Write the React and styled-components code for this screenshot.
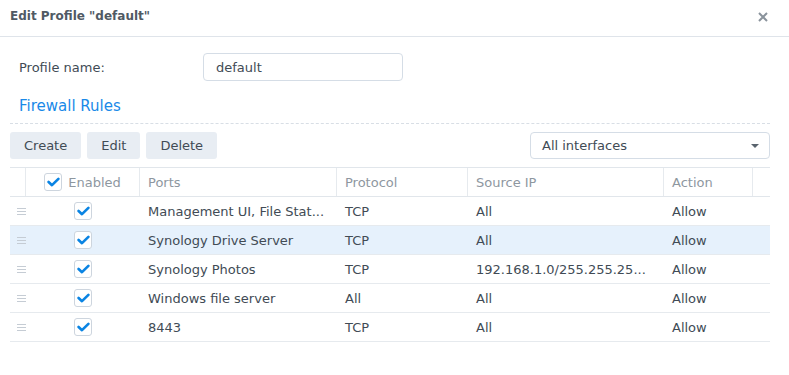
import React from "react";
import styled, { createGlobalStyle } from "styled-components";

const GlobalStyle = createGlobalStyle`
  html, body {
    margin: 0;
    padding: 0;
    background: #ffffff;
  }
  body {
    font-family: "DejaVu Sans", Verdana, sans-serif;
    font-size: 13px;
    color: #414b55;
  }
`;

const rules = [
  { ports: "Management UI, File Stat...", protocol: "TCP", source: "All", action: "Allow" },
  { ports: "Synology Drive Server", protocol: "TCP", source: "All", action: "Allow", selected: true },
  { ports: "Synology Photos", protocol: "TCP", source: "192.168.1.0/255.255.25...", action: "Allow" },
  { ports: "Windows file server", protocol: "All", source: "All", action: "Allow" },
  { ports: "8443", protocol: "TCP", source: "All", action: "Allow" },
];

const columns = "16px 114px 197px 131px 196px 89px 17px";

const CheckIcon = () => (
  <svg width="13" height="10" viewBox="0 0 13 10">
    <path d="M1.6 5 L5 8.2 L11.4 1.8" fill="none" stroke="#0a84e3" strokeWidth="2.6" strokeLinecap="round" strokeLinejoin="round" />
  </svg>
);

const Checkbox = () => (
  <Box>
    <CheckIcon />
  </Box>
);

const App = () => (
  <>
    <GlobalStyle />
    <Dialog>
      <TitleBar>
        <Title>Edit Profile "default"</Title>
        <Close>
          <svg width="10" height="10" viewBox="0 0 10 10">
            <path d="M1 1 L9 9 M9 1 L1 9" stroke="#8a939c" strokeWidth="2" />
          </svg>
        </Close>
      </TitleBar>
      <Body>
        <FieldRow>
          <Label>Profile name:</Label>
          <Input>default</Input>
        </FieldRow>
        <SectionTitle>Firewall Rules</SectionTitle>
        <Toolbar>
          <Button>Create</Button>
          <Button>Edit</Button>
          <Button>Delete</Button>
          <Spacer />
          <Select>
            <span>All interfaces</span>
            <Caret />
          </Select>
        </Toolbar>
        <Table>
          <HeaderRow>
            <HeadCell />
            <HeadCell $center>
              <Checkbox />
              <span>Enabled</span>
            </HeadCell>
            <HeadCell>Ports</HeadCell>
            <HeadCell>Protocol</HeadCell>
            <HeadCell>Source IP</HeadCell>
            <HeadCell>Action</HeadCell>
            <HeadCell $last />
          </HeaderRow>
          {rules.map((r) => (
            <Row key={r.ports} $selected={r.selected}>
              <Handle>
                <HandleLines />
              </Handle>
              <Cell $center>
                <Checkbox />
              </Cell>
              <Cell>{r.ports}</Cell>
              <Cell>{r.protocol}</Cell>
              <Cell>{r.source}</Cell>
              <Cell>{r.action}</Cell>
              <Cell />
            </Row>
          ))}
        </Table>
      </Body>
    </Dialog>
  </>
);

const Dialog = styled.div`
  width: 789px;
  height: 375px;
  background: #fff;
`;

const TitleBar = styled.div`
  height: 37px;
  box-sizing: border-box;
  border-bottom: 1px solid #dfe4ea;
  display: flex;
  align-items: center;
  justify-content: space-between;
  padding: 0 21px 0 10px;
`;

const Title = styled.div`
  font-weight: bold;
  font-size: 12px;
  color: #505a64;
  padding-bottom: 4px;
`;

const Close = styled.div`
  display: flex;
  align-items: center;
  padding-bottom: 2px;
`;

const Body = styled.div`
  padding: 16px 19px 0 10px;
`;

const FieldRow = styled.div`
  display: flex;
  align-items: center;
  padding-left: 9px;
`;

const Label = styled.div`
  width: 184px;
`;

const Input = styled.div`
  width: 200px;
  height: 28px;
  box-sizing: border-box;
  border: 1px solid #d5dde6;
  border-radius: 4px;
  padding: 0 12px;
  display: flex;
  align-items: center;
`;

const SectionTitle = styled.div`
  margin-top: 16px;
  padding: 0 0 8px 9px;
  font-size: 15px;
  color: #1989e8;
  border-bottom: 1px dashed #d8dee5;
`;

const Toolbar = styled.div`
  display: flex;
  gap: 6px;
  margin-top: 8px;
  height: 27px;
`;

const Button = styled.div`
  background: #e8edf3;
  border-radius: 3px;
  padding: 0 14px;
  display: flex;
  align-items: center;
  color: #414b55;
`;

const Spacer = styled.div`
  flex: 1;
`;

const Select = styled.div`
  width: 240px;
  box-sizing: border-box;
  border: 1px solid #d5dde6;
  border-radius: 4px;
  padding: 0 10px 0 11px;
  display: flex;
  align-items: center;
  justify-content: space-between;
`;

const Caret = styled.div`
  width: 0;
  height: 0;
  border-left: 4px solid transparent;
  border-right: 4px solid transparent;
  border-top: 4px solid #5a646e;
`;

const Table = styled.div`
  margin-top: 8px;
  width: 760px;
  border-top: 1px solid #e1e6eb;
`;

const HeaderRow = styled.div`
  display: grid;
  grid-template-columns: ${columns};
  height: 28px;
  border-bottom: 1px solid #e1e6eb;
`;

const HeadCell = styled.div`
  display: flex;
  align-items: center;
  justify-content: ${(p) => (p.$center ? "center" : "flex-start")};
  gap: 6px;
  padding-left: ${(p) => (p.$center ? "0" : "8px")};
  border-right: ${(p) => (p.$last ? "none" : "1px solid #e6eaee")};
  color: #8e979f;
`;

const Row = styled.div`
  display: grid;
  grid-template-columns: ${columns};
  height: 28px;
  border-bottom: 1px solid #e6eaee;
  background: ${(p) => (p.$selected ? "#e6f1fc" : "transparent")};
`;

const Cell = styled.div`
  display: flex;
  align-items: center;
  justify-content: ${(p) => (p.$center ? "center" : "flex-start")};
  padding-left: ${(p) => (p.$center ? "0" : "8px")};
  white-space: nowrap;
  overflow: hidden;
  color: #414b55;
`;

const Handle = styled.div`
  display: flex;
  align-items: center;
  justify-content: flex-end;
`;

const HandleLines = styled.div`
  width: 9px;
  height: 7px;
  border-top: 1px solid #c5ccd4;
  border-bottom: 1px solid #c5ccd4;
  position: relative;
  box-sizing: border-box;
  &::after {
    content: "";
    position: absolute;
    left: 0;
    right: 0;
    top: 2px;
    border-top: 1px solid #c5ccd4;
  }
`;

const Box = styled.div`
  width: 18px;
  height: 18px;
  box-sizing: border-box;
  border: 1px solid #cdd5de;
  border-radius: 3px;
  background: #fff;
  display: flex;
  align-items: center;
  justify-content: center;
`;

export default App;
